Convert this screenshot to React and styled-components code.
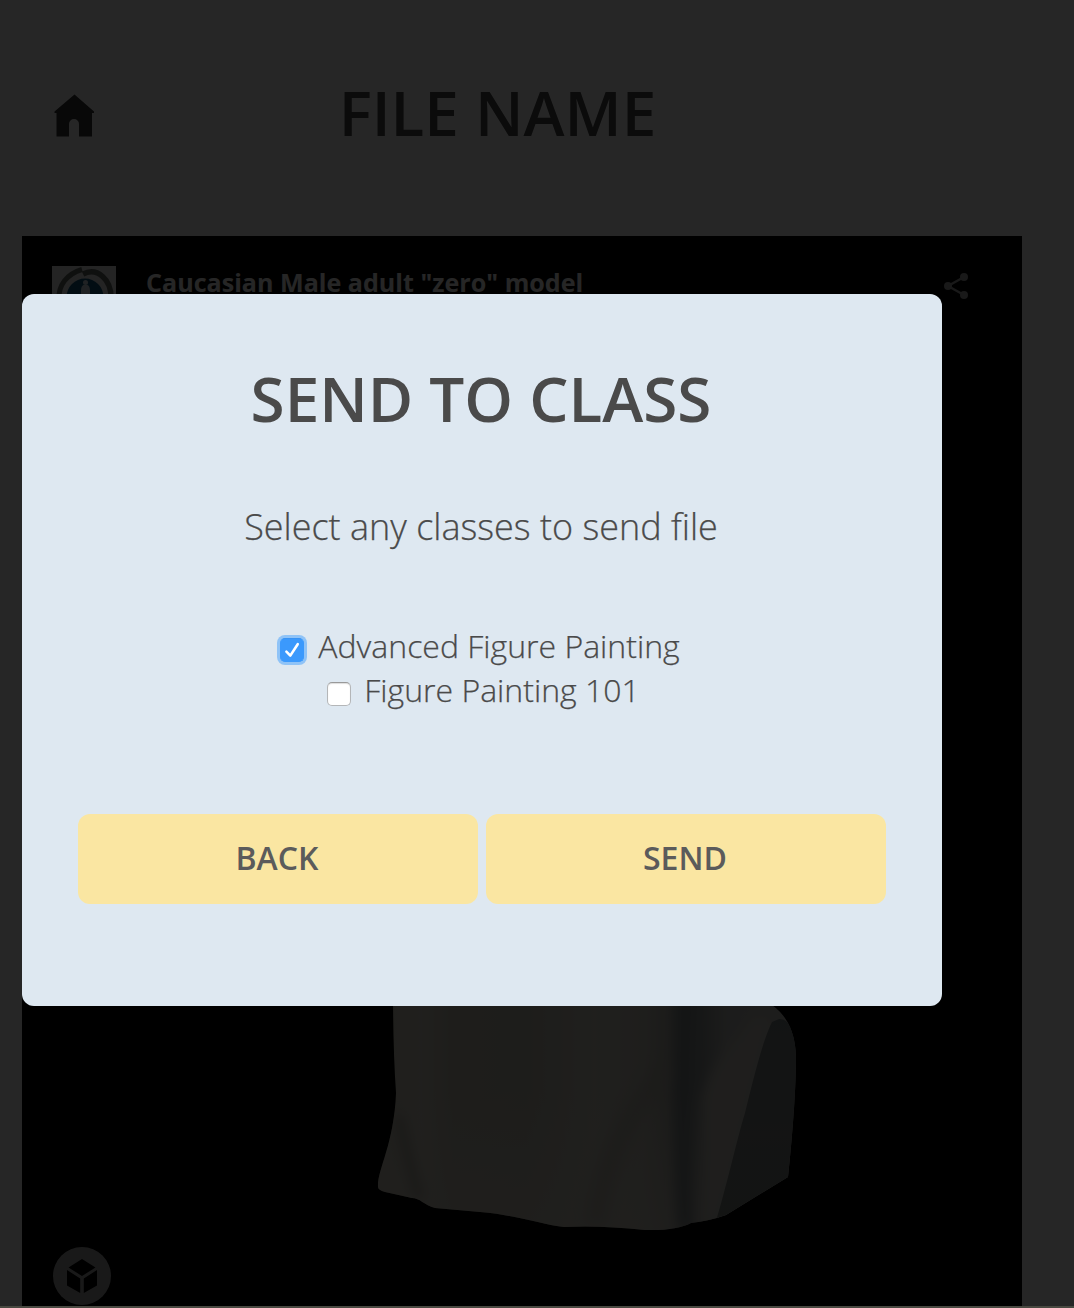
import React, { useState } from "react";
import styled, { createGlobalStyle } from "styled-components";

const GlobalStyle = createGlobalStyle`
  * { box-sizing: border-box; }
  body {
    margin: 0;
    background: #fff;
    color: #4a4a4a;
    font-family: "Open Sans", "Noto Sans", sans-serif;
    overflow: hidden;
  }
`;

const Page = styled.div`
  display: flex;
  flex-direction: column;
  height: 1308px;
  border-bottom: 2px solid #494941;
`;

const Header = styled.header`
  display: grid;
  grid-template-columns: 100px 1fr 100px;
  align-items: center;
  height: 236px;
  padding: 0 103px 13px 24px;
`;

const HomeLink = styled.a`
  display: flex;
  justify-content: center;
  color: #353535;
  margin-top: 8px;
  padding-right: 1px;
`;

const Heading = styled.h1`
  margin: 0;
  font-size: 62px;
  font-weight: 600;
  line-height: 88px;
  text-align: center;
  white-space: nowrap;
`;

const Viewer = styled.section`
  flex: 1;
  display: flex;
  flex-direction: column;
  justify-content: space-between;
  width: 1000px;
  margin-left: 22px;
  background: #000;
`;

const ViewerBar = styled.div`
  display: flex;
  align-items: flex-start;
  padding: 30px 53px 0 30px;
`;

const ModelName = styled.span`
  flex: 1;
  margin-left: 30px;
  color: #fff;
  font-size: 25.1px;
  font-weight: 700;
  line-height: 33px;
`;

const ShareIcon = styled.svg`
  margin-top: 6px;
`;

const ViewerBody = styled.div`
  display: flex;
  align-items: flex-end;
  height: 316px;
`;

const Badge = styled.div`
  display: flex;
  align-items: center;
  justify-content: center;
  width: 58px;
  height: 58px;
  margin: 0 0 1px 31px;
  border-radius: 50%;
  background: #aaa;
`;

const Bust = styled.svg`
  align-self: flex-start;
  margin-left: 249px;
`;

const Overlay = styled.div`
  position: fixed;
  inset: 0 0 2px;
  padding: 293.5px 0 0 22px;
  background: rgba(0, 0, 0, 0.85);
`;

const Dialog = styled.div`
  display: flex;
  flex-direction: column;
  align-items: center;
  width: 920px;
  height: 712px;
  padding: 60px 56px 0;
  border-radius: 12px;
  background: #dee8f1;
`;

const DialogTitle = styled(Heading)`
  padding-right: 2px;
`;

const Lead = styled.p`
  margin: 59px 0 0;
  padding-right: 2px;
  font-size: 36px;
  font-weight: 300;
  line-height: 52px;
  -webkit-text-stroke: 0.25px #4a4a4a;
  white-space: nowrap;
`;

const Options = styled.div`
  display: flex;
  flex-direction: column;
  align-items: center;
  margin-top: 71px;
`;

const Option = styled.label`
  display: flex;
  align-items: center;
  gap: ${(p) => (p.$checked ? 14 : 13)}px;
  height: 44px;
  padding-right: ${(p) => (p.$checked ? 4 : 0)}px;
  padding-left: ${(p) => (p.$checked ? 0 : 3)}px;
  font-size: 32px;
  font-weight: 300;
  -webkit-text-stroke: 0.25px #4a4a4a;
  white-space: nowrap;
`;

const HiddenInput = styled.input`
  position: absolute;
  opacity: 0;
  pointer-events: none;
`;

const Box = styled.span`
  flex: none;
  display: flex;
  align-items: center;
  justify-content: center;
  width: 24px;
  height: 24px;
  margin-top: 9px;
  border-radius: 5px;
  border: 1px solid ${(p) => (p.$checked ? "#3b99fc" : "#b4b6b8")};
  border-top-color: ${(p) => (p.$checked ? "#3793f5" : "#999")};
  background: ${(p) => (p.$checked ? "#3b99fc" : "#fff")};
  box-shadow: ${(p) => (p.$checked ? "0 0 0 3px #8fc3f7" : "inset 0 1px 1px #ddd")};
`;

const CheckMark = styled.svg`
  flex: none;
`;

const Actions = styled.div`
  display: flex;
  gap: 8px;
  width: 808px;
  margin-top: 102px;
`;

const Button = styled.button`
  flex: 1;
  height: 90px;
  padding: 0 2px 2px 0;
  border: 0;
  border-radius: 12px;
  background: #fae6a2;
  color: #5b5b5b;
  font: 600 32px "Open Sans", "Noto Sans", sans-serif;
`;

function ClassOption({ label, initial }) {
  const [checked, setChecked] = useState(initial);
  return (
    <Option $checked={checked}>
      <HiddenInput type="checkbox" checked={checked} onChange={() => setChecked(!checked)} />
      <Box $checked={checked}>
        {checked && (
          <CheckMark width="18" height="18" viewBox="0 0 18 18" fill="none" stroke="#fff" strokeWidth="2.6" strokeLinecap="round" strokeLinejoin="round">
            <path d="M3.4 10.7 7.3 14.6 14.7 3.2" />
          </CheckMark>
        )}
      </Box>
      {label}
    </Option>
  );
}

export default function App() {
  return (
    <>
      <GlobalStyle />
      <Page>
        <Header>
          <HomeLink aria-label="Home">
            <svg width="40" height="43" viewBox="0 0 40 43" fill="currentColor">
              <path d="M20.5 .5 40 17.5V19H38V42.5H25V30a5 5 0 0 0-10 0V42.5H2.5V19H.5V17.5Z" />
            </svg>
          </HomeLink>
          <Heading>FILE NAME</Heading>
        </Header>
        <Viewer>
          <ViewerBar>
            <svg width="64" height="64" viewBox="0 0 64 64">
              <rect width="64" height="64" fill="#f0f0f0" />
              <circle cx="33" cy="31" r="18.5" fill="#125a80" />
              <g fill="none" stroke="#676c69">
                <path d="M7 34C6 19 15 8 30 3.5" strokeWidth="5" />
                <path d="M31 8C45 1 60 13 59 34" strokeWidth="5.5" />
              </g>
              <path d="M29 32V25q0-5 2.500-6h4q2.500 1 2.500 6V32Z" fill="#d6e5ed" />
              <circle cx="33.500" cy="16.500" r="2.500" fill="#d6e5ed" />
            </svg>
            <ModelName>Caucasian Male adult "zero" model</ModelName>
            <ShareIcon width="25" height="28" viewBox="0 0 25 28" fill="#a5a5a5" stroke="#a5a5a5">
              <path d="M20 5 4 14 20 23" fill="none" strokeWidth="2.4" />
              <circle cx="20" cy="5" r="4" stroke="none" />
              <circle cx="4" cy="14" r="4" stroke="none" />
              <circle cx="20" cy="23" r="4" stroke="none" />
            </ShareIcon>
          </ViewerBar>
          <ViewerBody>
            <Badge>
              <svg width="32" height="36" viewBox="0 0 32 36" fill="#000">
                <path d="M16 1 29.5 9.5 16 18 2.5 9.5Z M1 12 14.2 20.5V35L1 27.5Z M31 12 17.8 20.5V35L31 27.5Z" />
              </svg>
            </Badge>
            <Bust width="460" height="250" viewBox="0 0 460 250">
              <defs>
                <linearGradient id="cloth" x1="33" x2="435" gradientUnits="userSpaceOnUse">
                  <stop offset="0" stopColor="#d2cdbe" />
                  <stop offset=".07" stopColor="#d7d2c5" />
                  <stop offset=".15" stopColor="#c6c2b4" />
                  <stop offset=".33" stopColor="#c3c0b3" />
                  <stop offset=".5" stopColor="#d3d0c4" />
                  <stop offset=".62" stopColor="#cbc8bd" />
                  <stop offset=".68" stopColor="#b8b7ae" />
                  <stop offset=".72" stopColor="#8f9696" />
                  <stop offset=".77" stopColor="#979c9b" />
                  <stop offset=".83" stopColor="#bcbcb8" />
                  <stop offset="1" stopColor="#c2c2be" />
                </linearGradient>
                <linearGradient id="lower" x2="0" y2="1">
                  <stop offset=".4" stopColor="#d8d3c7" stopOpacity="0" />
                  <stop offset="1" stopColor="#d8d3c7" stopOpacity=".65" />
                </linearGradient>
                <linearGradient id="side" x2="0" y2="1">
                  <stop offset="0" stopColor="#7c8586" />
                  <stop offset=".55" stopColor="#848484" />
                  <stop offset="1" stopColor="#7e8783" />
                </linearGradient>
                <filter id="soft" filterUnits="userSpaceOnUse" x="0" y="-30" width="460" height="310">
                  <feGaussianBlur stdDeviation="6" />
                </filter>
                <filter id="edge">
                  <feGaussianBlur stdDeviation=".7" />
                </filter>
                <clipPath id="outline">
                  <path d="M33 0 412 15Q435 31 436 67 436 110 428 187L366 225Q349 231 331 233 316 241 285 240 240 235 204 237C185 235 150 224 120 222L75 218C64 215 60 208 52 208L25 202Q18 200 18 197C17 180 34 155 36 103Q33 60 33 0Z" />
                </clipPath>
              </defs>
              <g filter="url(#edge)">
                <g clipPath="url(#outline)">
                  <rect width="460" height="250" fill="url(#cloth)" />
                  <rect width="460" height="250" fill="url(#lower)" />
                  <path d="M38 125Q50 178 60 210" stroke="#b4b1a6" strokeWidth="12" fill="none" filter="url(#soft)" />
                  <path d="M310 75Q246 145 235 235" stroke="#b9b6ab" strokeWidth="22" fill="none" opacity=".6" filter="url(#soft)" />
                  <path d="M327 0Q320 155 326 240" stroke="#848b8c" strokeWidth="13" fill="none" filter="url(#soft)" />
                  <path d="M394 25C370 60 350 75 342 110V235H357L412 30Z" fill="#cdcac1" filter="url(#soft)" />
                  <path d="M412 32 419 29Q429 28 440 50V240H353C362 215 378 145 385 123 392 95 402 52 412 32Z" fill="url(#side)" />
                </g>
              </g>
            </Bust>
          </ViewerBody>
        </Viewer>
      </Page>
      <Overlay>
        <Dialog role="dialog" aria-modal="true">
          <DialogTitle as="h2">SEND TO CLASS</DialogTitle>
          <Lead>Select any classes to send file</Lead>
          <Options>
            <ClassOption label="Advanced Figure Painting" initial />
            <ClassOption label="Figure Painting 101" initial={false} />
          </Options>
          <Actions>
            <Button>BACK</Button>
            <Button>SEND</Button>
          </Actions>
        </Dialog>
      </Overlay>
    </>
  );
}
